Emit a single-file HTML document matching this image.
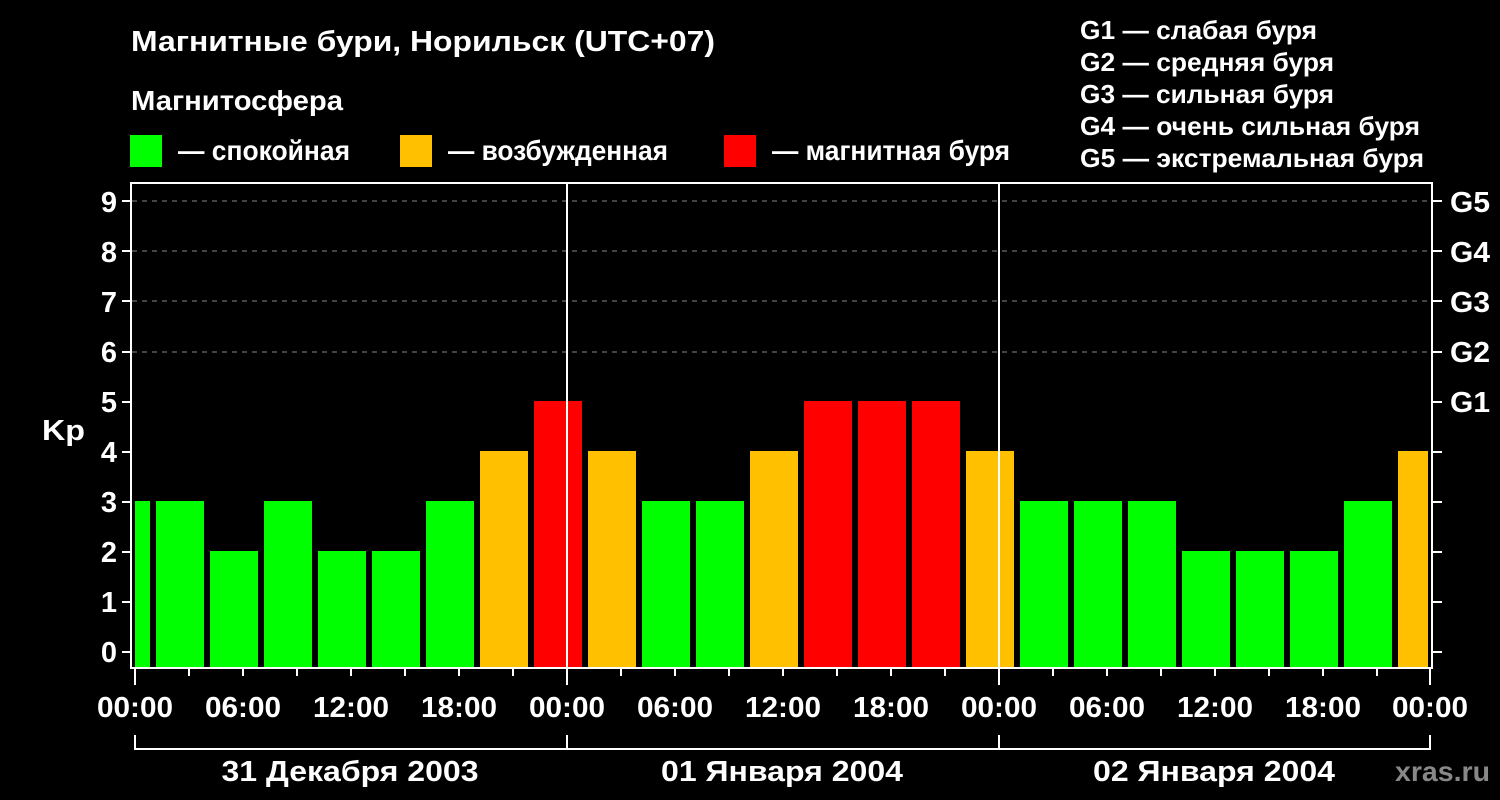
<!DOCTYPE html>
<html><head><meta charset="utf-8"><style>html,body{margin:0;padding:0;background:#000;}svg{display:block}</style></head><body>
<svg width="1500" height="800" viewBox="0 0 1500 800" xmlns="http://www.w3.org/2000/svg" font-family="Liberation Sans, Arial, sans-serif" font-weight="bold" fill="#fff">
<rect width="1500" height="800" fill="#000"/>
<text x="131" y="51" font-size="29" textLength="584" lengthAdjust="spacingAndGlyphs">Магнитные бури, Норильск (UTC+07)</text>
<text x="131" y="110" font-size="28" textLength="212" lengthAdjust="spacingAndGlyphs">Магнитосфера</text>
<rect x="130" y="135" width="32" height="32" fill="#00ff00"/>
<text x="178" y="160" font-size="28" textLength="172" lengthAdjust="spacingAndGlyphs">— спокойная</text>
<rect x="400" y="135" width="32" height="32" fill="#ffc000"/>
<text x="448" y="160" font-size="28" textLength="220" lengthAdjust="spacingAndGlyphs">— возбужденная</text>
<rect x="724" y="135" width="32" height="32" fill="#ff0000"/>
<text x="772" y="160" font-size="28" textLength="238" lengthAdjust="spacingAndGlyphs">— магнитная буря</text>
<g font-size="26">
<text x="1080" y="39" textLength="237" lengthAdjust="spacingAndGlyphs">G1 — слабая буря</text>
<text x="1080" y="71" textLength="254" lengthAdjust="spacingAndGlyphs">G2 — средняя буря</text>
<text x="1080" y="103" textLength="254" lengthAdjust="spacingAndGlyphs">G3 — сильная буря</text>
<text x="1080" y="135" textLength="340" lengthAdjust="spacingAndGlyphs">G4 — очень сильная буря</text>
<text x="1080" y="167" textLength="344" lengthAdjust="spacingAndGlyphs">G5 — экстремальная буря</text>
</g>
<g stroke="#888" stroke-width="1" stroke-dasharray="5,5">
<line x1="132" y1="201" x2="1432" y2="201"/><line x1="132" y1="251" x2="1432" y2="251"/><line x1="132" y1="301" x2="1432" y2="301"/><line x1="132" y1="352" x2="1432" y2="352"/>
</g>
<g>
<rect x="135" y="501" width="15" height="167" fill="#00ff00"/>
<rect x="156" y="501" width="48" height="167" fill="#00ff00"/>
<rect x="210" y="551" width="48" height="117" fill="#00ff00"/>
<rect x="264" y="501" width="48" height="167" fill="#00ff00"/>
<rect x="318" y="551" width="48" height="117" fill="#00ff00"/>
<rect x="372" y="551" width="48" height="117" fill="#00ff00"/>
<rect x="426" y="501" width="48" height="167" fill="#00ff00"/>
<rect x="480" y="451" width="48" height="217" fill="#ffc000"/>
<rect x="534" y="401" width="48" height="267" fill="#ff0000"/>
<rect x="588" y="451" width="48" height="217" fill="#ffc000"/>
<rect x="642" y="501" width="48" height="167" fill="#00ff00"/>
<rect x="696" y="501" width="48" height="167" fill="#00ff00"/>
<rect x="750" y="451" width="48" height="217" fill="#ffc000"/>
<rect x="804" y="401" width="48" height="267" fill="#ff0000"/>
<rect x="858" y="401" width="48" height="267" fill="#ff0000"/>
<rect x="912" y="401" width="48" height="267" fill="#ff0000"/>
<rect x="966" y="451" width="48" height="217" fill="#ffc000"/>
<rect x="1020" y="501" width="48" height="167" fill="#00ff00"/>
<rect x="1074" y="501" width="48" height="167" fill="#00ff00"/>
<rect x="1128" y="501" width="48" height="167" fill="#00ff00"/>
<rect x="1182" y="551" width="48" height="117" fill="#00ff00"/>
<rect x="1236" y="551" width="48" height="117" fill="#00ff00"/>
<rect x="1290" y="551" width="48" height="117" fill="#00ff00"/>
<rect x="1344" y="501" width="48" height="167" fill="#00ff00"/>
<rect x="1398" y="451" width="30" height="217" fill="#ffc000"/>
</g>
<g stroke="#fff" stroke-width="2" fill="none">
<rect x="131" y="183" width="1301" height="485"/>
<line x1="567" y1="183" x2="567" y2="668"/><line x1="999" y1="183" x2="999" y2="668"/>
<path d="M122 201h9M122 251h9M122 301h9M122 352h9M122 402h9M122 452h9M122 502h9M122 552h9M122 602h9M122 652h9"/>
<path d="M1432 201h10M1432 251h10M1432 301h10M1432 352h10M1432 402h10M1432 452h10M1432 502h10M1432 552h10M1432 602h10M1432 652h10"/>
<path d="M135 668v17M189 668v8M243 668v8M297 668v8M351 668v8M405 668v8M459 668v8M513 668v8M567 668v17M621 668v8M675 668v8M729 668v8M783 668v8M837 668v8M891 668v8M945 668v8M999 668v17M1053 668v8M1107 668v8M1161 668v8M1215 668v8M1269 668v8M1323 668v8M1377 668v8M1430 668v17"/>
<path d="M135 735v14H1430v-14M567 735v14M999 735v14"/>
</g>
<g font-size="29" text-anchor="end">
<text x="117" y="212">9</text><text x="117" y="262">8</text><text x="117" y="312">7</text><text x="117" y="362">6</text><text x="117" y="412">5</text><text x="117" y="462">4</text><text x="117" y="512">3</text><text x="117" y="562">2</text><text x="117" y="612">1</text><text x="117" y="662">0</text>
</g>
<text x="42" y="440" font-size="29" textLength="43" lengthAdjust="spacingAndGlyphs">Kp</text>
<g font-size="29">
<text x="1450" y="212" textLength="40" lengthAdjust="spacingAndGlyphs">G5</text><text x="1450" y="262" textLength="40" lengthAdjust="spacingAndGlyphs">G4</text><text x="1450" y="312" textLength="40" lengthAdjust="spacingAndGlyphs">G3</text><text x="1450" y="362" textLength="40" lengthAdjust="spacingAndGlyphs">G2</text><text x="1450" y="412" textLength="40" lengthAdjust="spacingAndGlyphs">G1</text>
</g>
<g font-size="29" text-anchor="middle">
<text x="135" y="717" textLength="76" lengthAdjust="spacingAndGlyphs">00:00</text><text x="243" y="717" textLength="76" lengthAdjust="spacingAndGlyphs">06:00</text><text x="351" y="717" textLength="76" lengthAdjust="spacingAndGlyphs">12:00</text><text x="459" y="717" textLength="76" lengthAdjust="spacingAndGlyphs">18:00</text>
<text x="567" y="717" textLength="76" lengthAdjust="spacingAndGlyphs">00:00</text><text x="675" y="717" textLength="76" lengthAdjust="spacingAndGlyphs">06:00</text><text x="783" y="717" textLength="76" lengthAdjust="spacingAndGlyphs">12:00</text><text x="891" y="717" textLength="76" lengthAdjust="spacingAndGlyphs">18:00</text>
<text x="999" y="717" textLength="76" lengthAdjust="spacingAndGlyphs">00:00</text><text x="1107" y="717" textLength="76" lengthAdjust="spacingAndGlyphs">06:00</text><text x="1215" y="717" textLength="76" lengthAdjust="spacingAndGlyphs">12:00</text><text x="1323" y="717" textLength="76" lengthAdjust="spacingAndGlyphs">18:00</text><text x="1430" y="717" textLength="76" lengthAdjust="spacingAndGlyphs">00:00</text>
<text x="350" y="781" textLength="257" lengthAdjust="spacingAndGlyphs">31 Декабря 2003</text><text x="782" y="781" textLength="242" lengthAdjust="spacingAndGlyphs">01 Января 2004</text><text x="1214" y="781" textLength="242" lengthAdjust="spacingAndGlyphs">02 Января 2004</text>
</g>
<text x="1395" y="781" font-size="28" fill="#888" textLength="95" lengthAdjust="spacingAndGlyphs">xras.ru</text>
</svg>
</body></html>
